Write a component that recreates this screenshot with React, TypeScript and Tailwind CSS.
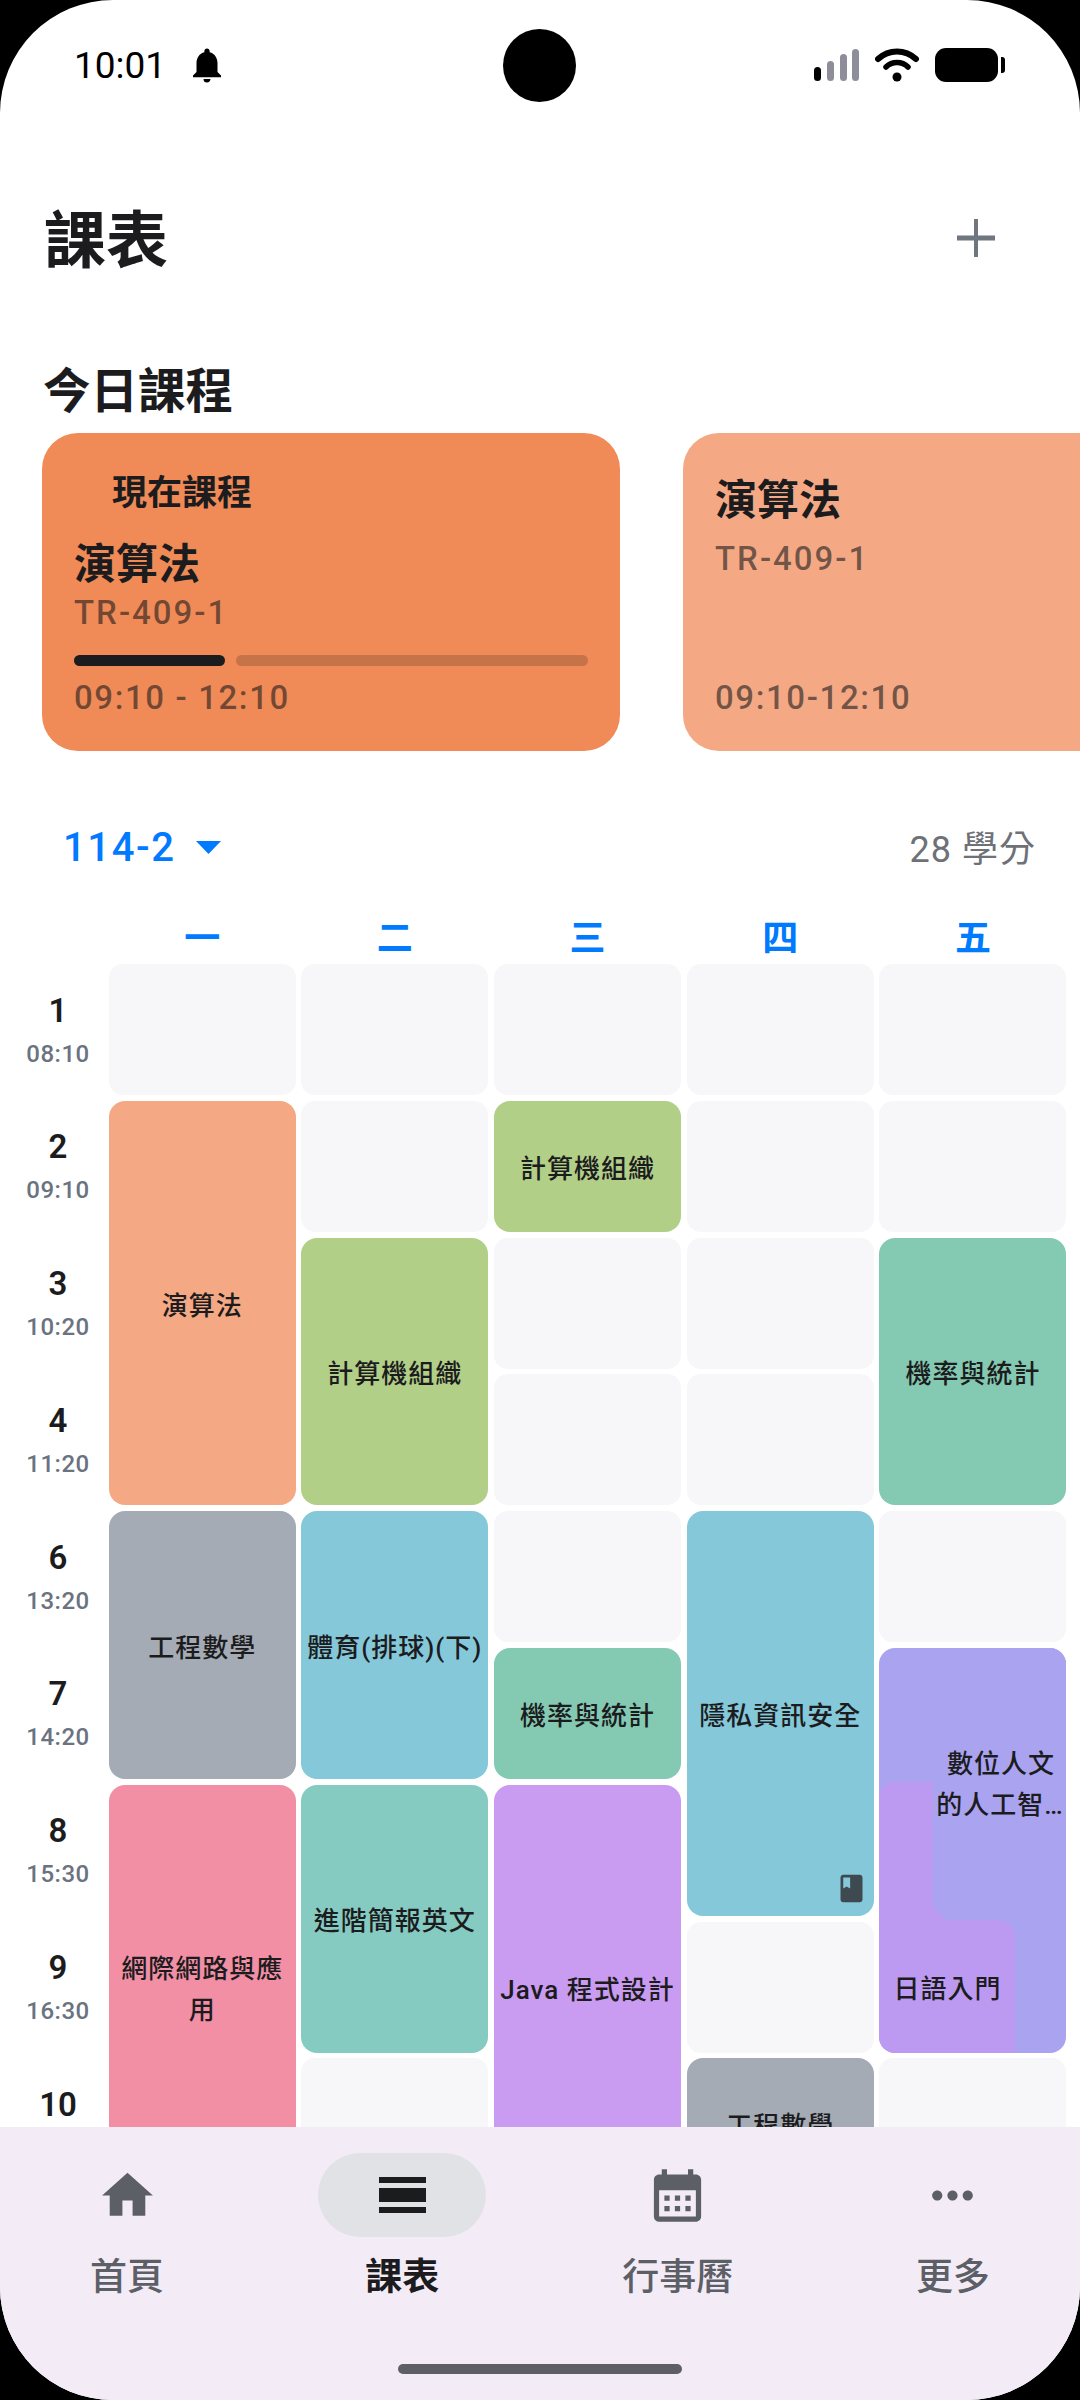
import React from "react";
import { MdBook, MdCalendarMonth, MdHome, MdMoreHoriz, MdNotifications } from "react-icons/md";

const CJK = "font-['Roboto','Noto_Sans_CJK_TC',sans-serif]";

// One block on the timetable. col is 1-5 for Monday-Friday, row is the period index
interface Course {
  name: string;
  col: string;
  row: string;
  bg: string;
}

const periods = [
  { no: "1", time: "08:10" },
  { no: "2", time: "09:10" },
  { no: "3", time: "10:20" },
  { no: "4", time: "11:20" },
  { no: "6", time: "13:20" },
  { no: "7", time: "14:20" },
  { no: "8", time: "15:30" },
  { no: "9", time: "16:30" },
  { no: "10", time: "17:30" },
];

const courses: Course[] = [
  { name: "演算法", col: "col-start-2", row: "row-start-2 row-span-3", bg: "bg-[#f4a984]" },
  { name: "工程數學", col: "col-start-2", row: "row-start-5 row-span-2", bg: "bg-[#a4abb4]" },
  { name: "網際網路與應用", col: "col-start-2", row: "row-start-7 row-span-3", bg: "bg-[#f28fa5]" },
  { name: "計算機組織", col: "col-start-3", row: "row-start-3 row-span-2", bg: "bg-[#b2cf88]" },
  { name: "體育(排球)(下)", col: "col-start-3", row: "row-start-5 row-span-2", bg: "bg-[#84c8d9]" },
  { name: "進階簡報英文", col: "col-start-3", row: "row-start-7 row-span-2", bg: "bg-[#86cbc2]" },
  { name: "計算機組織", col: "col-start-4", row: "row-start-2", bg: "bg-[#b2cf88]" },
  { name: "機率與統計", col: "col-start-4", row: "row-start-6", bg: "bg-[#84cab2]" },
  { name: "Java 程式設計", col: "col-start-4", row: "row-start-7 row-span-3", bg: "bg-[#c99bf1]" },
  { name: "工程數學", col: "col-start-5", row: "row-start-9", bg: "bg-[#a4abb4]" },
  { name: "機率與統計", col: "col-start-6", row: "row-start-3 row-span-2", bg: "bg-[#84cab2]" },
];

// cells with nothing in them
const empties = [
  "col-start-2 row-start-1",
  "col-start-3 row-start-1",
  "col-start-4 row-start-1",
  "col-start-5 row-start-1",
  "col-start-6 row-start-1",
  "col-start-3 row-start-2",
  "col-start-5 row-start-2",
  "col-start-6 row-start-2",
  "col-start-4 row-start-3",
  "col-start-5 row-start-3",
  "col-start-4 row-start-4",
  "col-start-5 row-start-4",
  "col-start-4 row-start-5",
  "col-start-6 row-start-5",
  "col-start-5 row-start-8",
  "col-start-3 row-start-9",
  "col-start-6 row-start-9",
];

const labelRows = [
  "row-start-1",
  "row-start-2",
  "row-start-3",
  "row-start-4",
  "row-start-5",
  "row-start-6",
  "row-start-7",
  "row-start-8",
  "row-start-9",
];

const StatusBar = () => (
  <div className="relative flex h-[130px] shrink-0 items-center pl-[74px] pr-[75px] text-black">
    <span className="text-[37px] leading-none font-['Roboto',sans-serif]">10:01</span>
    <MdNotifications className="ml-[20px] text-[42px]" />
    {/* camera cutout */}
    <div className="absolute left-[503px] top-[29px] h-[73px] w-[73px] rounded-full bg-black" />
    <div className="ml-auto flex items-center">
      <svg width="46" height="34" viewBox="0 0 46 34" className="mt-[2px]">
        <rect x="0" y="18" width="7" height="14" rx="3.5" fill="#000" />
        <rect x="13" y="12" width="7" height="20" rx="3.5" fill="#8e8e9a" />
        <rect x="26" y="5" width="7" height="27" rx="3.5" fill="#8e8e9a" />
        <rect x="38" y="0" width="7" height="32" rx="3.5" fill="#8e8e9a" />
      </svg>
      <svg width="44" height="34" viewBox="0 0 44 34" className="ml-[15px]">
        <path d="M3 11 C14 1 30 1 41 11" fill="none" stroke="#000" strokeWidth="6" strokeLinecap="round" />
        <path d="M11 19 C17 13 27 13 33 19" fill="none" stroke="#000" strokeWidth="5.5" strokeLinecap="round" />
        <circle cx="22" cy="29" r="4.5" fill="#000" />
      </svg>
      <div className="ml-[16px] h-[34px] w-[63px] rounded-[11px] bg-black" />
      <div className="ml-[3px] h-[16px] w-[4px] rounded-r-[3px] bg-black" />
    </div>
  </div>
);

const TodayCards = () => (
  <div className="mt-[11px] flex h-[318px] shrink-0 gap-[63px] overflow-hidden pl-[42px]">
    <div className="flex w-[578px] shrink-0 flex-col rounded-[36px] bg-[#f08a56] pl-[32px] pr-[32px] pt-[41px]">
      <div className="pl-[38px] text-[35px] font-semibold leading-[40px] text-[#1c1c1e]">現在課程</div>
      <div className="mt-[26px] text-[42px] font-semibold leading-[50px] text-[#1c1c1e]">演算法</div>
      <div className="mt-[3px] text-[33px] font-medium leading-[40px] tracking-[2px] text-[#1c1c1e]/60">TR-409-1</div>
      <div className="mt-[22px] flex gap-[11px]">
        <div className="h-[11px] w-[151px] rounded-full bg-[#1c1c1e]" />
        <div className="h-[11px] w-[352px] rounded-full bg-[#c7734a]" />
      </div>
      <div className="mt-[12px] text-[33px] font-medium leading-[40px] tracking-[1.6px] text-[#1c1c1e]/60">09:10 - 12:10</div>
    </div>
    <div className="flex w-[578px] shrink-0 flex-col rounded-[36px] bg-[#f4a984] pb-[33px] pl-[32px] pt-[43px]">
      <div className="text-[42px] font-semibold leading-[50px] text-[#1c1c1e]">演算法</div>
      <div className="mt-[13px] text-[33px] font-medium leading-[40px] tracking-[2px] text-[#1c1c1e]/60">TR-409-1</div>
      <div className="mt-auto text-[33px] font-medium leading-[40px] tracking-[1.6px] text-[#1c1c1e]/60">09:10-12:10</div>
    </div>
  </div>
);

const Timetable = () => (
  <div className="grid shrink-0 grid-cols-[90px_repeat(5,187px)] auto-rows-[131px] gap-x-[5.7px] gap-y-[5.8px] pl-[13px]">
    {periods.map((p, i) => (
      <div key={p.no} className={`col-start-1 ${labelRows[i]} flex flex-col items-center justify-center`}>
        <div className="text-[33px] font-semibold leading-[48px] text-[#1c1c1e]">{p.no}</div>
        <div className="text-[24px] font-medium leading-[38px] tracking-[0.5px] text-[#6b7280]">{p.time}</div>
      </div>
    ))}

    {empties.map((c) => (
      <div key={c} className={`${c} rounded-[14px] bg-[#f7f7f9]`} />
    ))}

    {courses.map((c) => (
      <div
        key={c.name + c.col}
        className={`${c.col} ${c.row} ${c.bg} flex items-center justify-center rounded-[16px] px-[3px] pt-[6px] text-center text-[26px] font-medium leading-[41px] tracking-[1px] text-[#1c1c1e]`}
      >
        {c.name}
      </div>
    ))}

    {/* this one has a book badge in the corner */}
    <div className="relative col-start-5 row-start-5 row-span-3 flex items-center justify-center rounded-[16px] bg-[#84c8d9] pt-[6px] text-[26px] font-medium tracking-[1px] text-[#1c1c1e]">
      隱私資訊安全
      <MdBook className="absolute bottom-[11px] right-[6px] text-[33px] text-[#3f4a50]" />
    </div>

    {/* Friday: two courses overlap here, drawn on top of each other */}
    <div className="col-start-6 row-start-5 rounded-[14px] bg-[#f7f7f9]" />
    <div className="relative col-start-6 row-start-6 row-span-3 rounded-[16px] bg-[#a9a3f0] text-[26px] font-medium leading-[41px] tracking-[1px] text-[#1c1c1e]">
      <div className="absolute left-0 top-[134px] h-[269px] w-[66px] rounded-[16px] rounded-br-none bg-[#bc9af1]" />
      <div className="absolute left-[54px] top-[255px] h-[14px] w-[20px] bg-[#bc9af1]" />
      <div className="absolute bottom-0 left-0 flex h-[133px] w-[136px] items-center justify-center rounded-bl-[16px] rounded-tr-[16px] bg-[#bc9af1] pt-[6px]">
        日語入門
      </div>
      <div className="absolute left-[54px] top-0 flex h-[269px] w-[133px] flex-col items-center justify-center rounded-[16px] bg-[#a9a3f0] pt-[6px] text-center">
        <div className="pl-[2px] whitespace-nowrap">數位人文</div>
        <div className="whitespace-nowrap">的人工智…</div>
      </div>
    </div>
  </div>
);

const BottomNav = () => (
  <div className="relative h-[273px] shrink-0 bg-[#f3ecf7]">
    <div className="flex justify-between px-[43px] pt-[26px]">
      <div className="flex w-[168px] flex-col items-center">
        <div className="flex h-[84px] w-[168px] items-center justify-center">
          <MdHome className="text-[61px] text-[#5d5f67]" />
        </div>
        <span className="mt-[19px] text-[37px] font-medium leading-[44px] text-[#5d5f67]">首頁</span>
      </div>
      <div className="flex w-[168px] flex-col items-center">
        <div className="flex h-[84px] w-[168px] items-center justify-center rounded-full bg-[#e1e2e6]">
          <svg width="47" height="36" viewBox="0 0 47 36" fill="#1c1c1e">
            <rect x="0" y="0" width="47" height="6" />
            <rect x="0" y="11" width="47" height="14" />
            <rect x="0" y="30" width="47" height="6" />
          </svg>
        </div>
        <span className="mt-[19px] text-[37px] font-bold leading-[44px] text-[#1c1c1e]">課表</span>
      </div>
      <div className="flex w-[168px] flex-col items-center">
        <div className="flex h-[84px] w-[168px] items-center justify-center">
          <MdCalendarMonth className="text-[63px] text-[#5d5f67]" />
        </div>
        <span className="mt-[19px] text-[37px] font-medium leading-[44px] text-[#5d5f67]">行事曆</span>
      </div>
      <div className="flex w-[168px] flex-col items-center">
        <div className="flex h-[84px] w-[168px] items-center justify-center">
          <MdMoreHoriz className="text-[61px] text-[#5d5f67]" />
        </div>
        <span className="mt-[19px] text-[37px] font-medium leading-[44px] text-[#5d5f67]">更多</span>
      </div>
    </div>
    <div className="absolute bottom-[26px] left-[398px] h-[10px] w-[284px] rounded-full bg-[#5d5e66]" />
  </div>
);

export default function App() {
  return (
    <div className={`h-[2400px] w-[1080px] bg-black ${CJK}`}>
      <div className="flex h-full flex-col overflow-hidden rounded-[113px] bg-white">
        <StatusBar />
        <div className="min-h-0 flex-1 overflow-hidden">
          {/* title row */}
          <div className="mt-[70px] flex h-[80px] items-center justify-between pl-[44px] pr-[85px]">
            <h1 className="pt-[4px] text-[62px] font-bold leading-[80px] text-[#1c1c1e]">課表</h1>
            <svg width="38" height="38" viewBox="0 0 38 38" className="-mt-[5px]" fill="#6f7680">
              <rect x="17" y="0" width="4" height="38" />
              <rect x="0" y="16.5" width="38" height="5" />
            </svg>
          </div>

          <h2 className="mt-[82px] h-[60px] pl-[43px] text-[47.5px] font-semibold leading-[60px] text-[#1c1c1e]">今日課程</h2>
          <TodayCards />

          {/* semester and credits */}
          <div className="mt-[66px] flex h-[60px] items-center justify-between pl-[63px] pr-[44px]">
            <div className="flex items-center text-[#007aff]">
              <span className="pt-[2px] text-[40px] font-medium tracking-[1.6px]">114-2</span>
              <svg width="25" height="13" viewBox="0 0 25 13" className="ml-[20px]" fill="#007aff">
                <path d="M0 0h25L12.5 13z" />
              </svg>
            </div>
            <span className="pt-[6px] text-[36px] tracking-[1px] text-[#6e7177]">28 學分</span>
          </div>

          {/* weekdays */}
          <div className="mt-[37px] grid h-[50px] grid-cols-[90px_repeat(5,187px)] gap-x-[5.7px] pl-[13px] text-center text-[36px] font-bold leading-[50px] text-[#007aff]">
            <div />
            <div>一</div>
            <div>二</div>
            <div>三</div>
            <div>四</div>
            <div>五</div>
          </div>

          <Timetable />
        </div>
        <BottomNav />
      </div>
    </div>
  );
}
